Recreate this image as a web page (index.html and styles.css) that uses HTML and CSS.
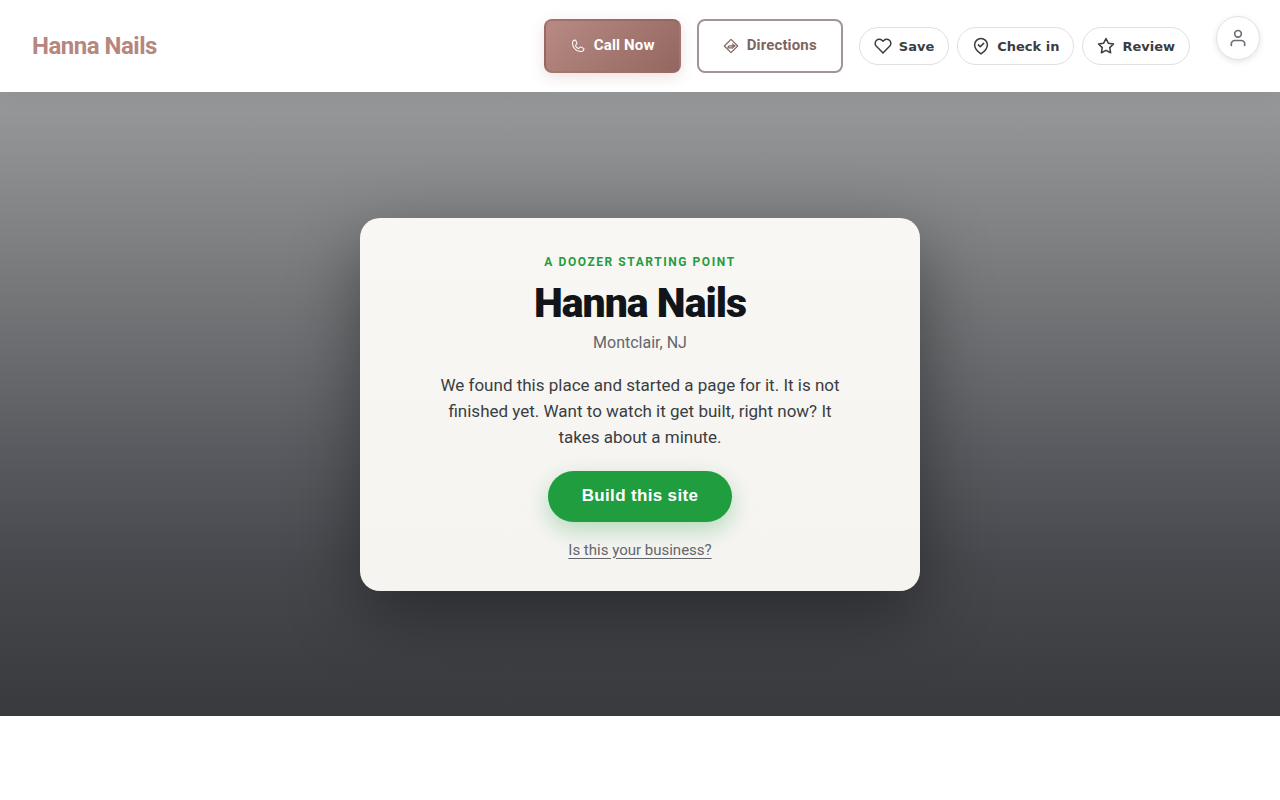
FILE: index.html
```html
<!DOCTYPE html>
<html lang="en">
<head>
<meta charset="utf-8">
<meta name="viewport" content="width=device-width, initial-scale=1">
<title>Hanna Nails</title>
<link rel="stylesheet" href="styles.css">
</head>
<body>
<header class="site-header">
  <a class="brand" href="#">Hanna Nails</a>
  <nav class="actions" aria-label="Business actions">
    <a class="btn btn-primary" href="#call">
      <svg class="btn-icon" viewBox="0 0 256 256" fill="currentColor" aria-hidden="true"><path d="M222.37,158.46l-47.11-21.11-.13-.06a16,16,0,0,0-15.17,1.4,8.12,8.12,0,0,0-.75.56L134.87,160c-15.42-7.49-31.34-23.29-38.83-38.51l20.78-24.71c.2-.25.39-.5.57-.77a16,16,0,0,0,1.32-15.06l0-.12L97.54,33.64a16,16,0,0,0-16.62-9.52A56.26,56.26,0,0,0,32,80c0,79.4,64.6,144,144,144a56.26,56.26,0,0,0,55.88-48.92A16,16,0,0,0,222.37,158.46ZM176,208A128.14,128.14,0,0,1,48,80,40.2,40.2,0,0,1,82.87,40a.61.61,0,0,0,0,.12l21,47L83.2,111.86a6.13,6.13,0,0,0-.57.77,16,16,0,0,0-1,15.7c9.06,18.53,27.73,37.06,46.46,46.11a16,16,0,0,0,15.75-1.14,8.44,8.44,0,0,0,.74-.56L168.89,152l47,21.05h0s.08,0,.11,0A40.21,40.21,0,0,1,176,208Z"/></svg>
      <span class="btn-label">Call Now</span>
    </a>
    <a class="btn btn-outline" href="#directions">
      <svg class="btn-icon" viewBox="0 0 16 16" fill="none" stroke="currentColor" stroke-width="1.2" stroke-linejoin="round" stroke-linecap="round" aria-hidden="true"><path d="M8 1.300 14.700 8 8 14.700 1.300 8z"/><path d="M5 9.800Q5 7.800 6.600 7.800H12M5 9.800H9.500"/><path d="M9.600 5.600 12.200 7.900 9.600 10.200z" fill="currentColor" stroke-width=".5"/></svg>
      <span class="btn-label">Directions</span>
    </a>
    <div class="pills">
      <button class="pill" type="button">
        <svg class="pill-icon" viewBox="0 0 24 24" aria-hidden="true"><path d="M20.84 4.61a5.5 5.5 0 0 0-7.78 0L12 5.67l-1.06-1.06a5.5 5.5 0 0 0-7.78 7.78l1.06 1.06L12 21.23l7.78-7.78 1.06-1.06a5.5 5.5 0 0 0 0-7.78z"/></svg>
        Save
      </button>
      <button class="pill" type="button">
        <svg class="pill-icon" viewBox="0 0 24 24" aria-hidden="true"><path d="M20.500 10.500c0 6-8.500 12-8.500 12s-8.500-6-8.500-12a8.500 8.500 0 0 1 17 0z"/><path d="m8.500 10.500 2.500 2.500 4.500-4.500"/></svg>
        Check in
      </button>
      <button class="pill" type="button">
        <svg class="pill-icon" viewBox="0 0 24 24" aria-hidden="true"><path d="m12 2 3.090 6.260L22 9.270l-5 4.870 1.180 6.880L12 17.770l-6.180 3.250L7 14.140 2 9.270l6.910-1.010z"/></svg>
        Review
      </button>
    </div>
  </nav>
  <button class="account" type="button" aria-label="Account">
    <svg class="account-icon" viewBox="0 0 24 24" aria-hidden="true"><path d="M20 21v-2a4 4 0 0 0-4-4H8a4 4 0 0 0-4 4v2"/><circle cx="12" cy="7" r="4"/></svg>
  </button>
</header>
<main class="hero">
  <section class="card">
    <p class="kicker">A Doozer starting point</p>
    <h1 class="title">Hanna Nails</h1>
    <p class="place">Montclair, NJ</p>
    <p class="pitch">We found this place and started a page for it. It is not finished yet. Want to watch it get built, right now? It takes about a minute.</p>
    <button class="build" type="button">Build this site</button>
    <a class="claim" href="#claim">Is this your business?</a>
  </section>
</main>
</body>
</html>
```
FILE: styles.css
```css
* {
  box-sizing: border-box;
}

body {
  margin: 0;
  background: #fff;
  font-family: Roboto, "Liberation Sans", sans-serif;
  color: #3a3d42;
}

.site-header {
  position: relative;
  display: flex;
  align-items: center;
  min-height: 92px;
  padding: 16px 20px 16px 32px;
  background: #fff;
  box-shadow: 0 4px 20px rgba(0, 0, 0, 0.06);
}

.brand {
  margin-right: auto;
  color: #b5877f;
  font-size: 24px;
  font-weight: 700;
  letter-spacing: -0.5px;
  line-height: 32px;
  text-decoration: none;
}

.actions {
  display: flex;
  align-items: center;
  gap: 16px;
}

.btn {
  display: flex;
  align-items: center;
  gap: 8px;
  height: 54px;
  padding: 0 24px;
  border: 2px solid;
  border-radius: 8px;
  font-size: 15px;
  font-weight: 700;
  letter-spacing: 0.01em;
  text-decoration: none;
}

.btn-label {
  padding-bottom: 2px;
}

.btn-icon {
  width: 16px;
  height: 16px;
}

.btn-primary {
  border-color: rgba(150, 100, 95, 0.5);
  background: linear-gradient(135deg, #b78b83, #936660);
  box-shadow: 0 4px 14px rgba(181, 135, 127, 0.25);
  color: #fff;
}

.btn-outline {
  border-color: #a39494;
  color: #80655f;
}

.pills {
  display: flex;
  gap: 8px;
}

.pill {
  display: flex;
  align-items: center;
  gap: 7px;
  height: 38px;
  padding: 0 14px;
  border: 1px solid #dfe0e2;
  border-radius: 19px;
  background: #fff;
  color: #3a3d42;
  font: 600 13px "DejaVu Sans", sans-serif;
}

.pill-icon,
.account-icon {
  fill: none;
  stroke: currentColor;
  stroke-width: 2;
  stroke-linecap: round;
  stroke-linejoin: round;
}

.pill-icon {
  width: 18px;
  height: 18px;
}

.account {
  display: grid;
  place-items: center;
  align-self: flex-start;
  width: 44px;
  height: 44px;
  margin-left: 26px;
  padding: 0;
  border: 1px solid #e2e2e4;
  border-radius: 50%;
  background: #fff;
  box-shadow: 0 2px 6px rgba(0, 0, 0, 0.1);
  color: #6b6e74;
}

.account-icon {
  width: 20px;
  height: 20px;
}

.hero {
  display: grid;
  place-items: center;
  min-height: 78vh;
  padding: 24px;
  background: linear-gradient(#98999b 0%, #838485 20%, #5b5c61 56%, #46484d 76%, #383a3d 100%);
}

.card {
  display: flex;
  flex-direction: column;
  align-items: center;
  width: 100%;
  max-width: 560px;
  padding: 36px 40px 32px;
  border-radius: 20px;
  background: linear-gradient(#f8f7f4, #f5f4f1);
  box-shadow: 0 24px 70px rgba(0, 0, 0, 0.4);
  text-align: center;
}

.kicker {
  margin: 0;
  color: #1f9d3f;
  font-size: 12px;
  font-weight: 700;
  letter-spacing: 0.13em;
  line-height: 16px;
  text-transform: uppercase;
}

.title {
  margin: 10px 0 0;
  color: #111418;
  font-size: 41px;
  font-weight: 900;
  letter-spacing: -1px;
  line-height: 46px;
}

.place {
  margin: 7px 0 0;
  color: #63666b;
  font-size: 16px;
  line-height: 20px;
}

.pitch {
  max-width: 400px;
  margin: 19px 0 0;
  font-size: 17px;
  line-height: 26px;
}

.build {
  height: 51px;
  margin-top: 21px;
  padding: 0 34px;
  border: 0;
  border-radius: 26px;
  background: #1f9d3f;
  box-shadow: 0 8px 22px rgba(31, 157, 63, 0.3);
  color: #fff;
  font: 700 17px "Liberation Sans", sans-serif;
  letter-spacing: 0.02em;
}

.claim {
  margin-top: 19px;
  color: #63666b;
  font-size: 15px;
  line-height: 18px;
  text-decoration: underline;
  text-underline-offset: 3px;
}
```
